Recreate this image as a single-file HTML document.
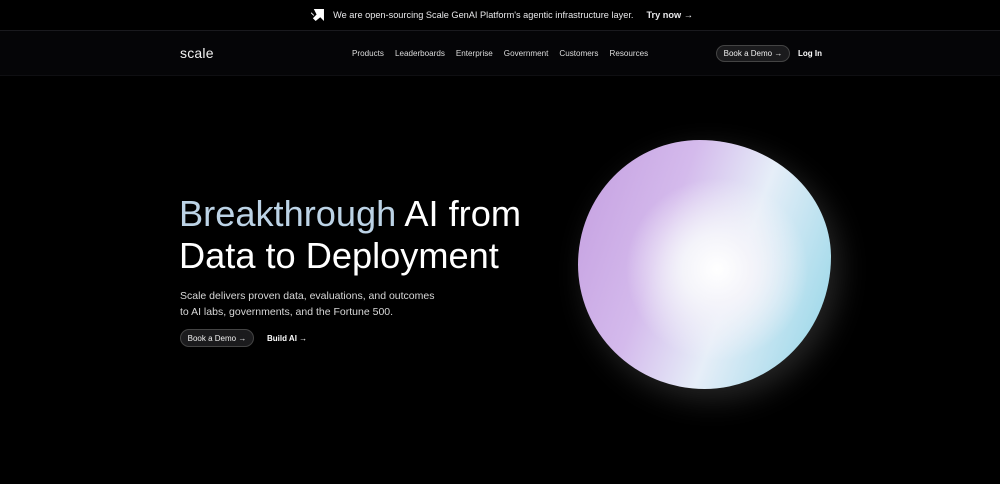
<!DOCTYPE html>
<html><head><meta charset="utf-8"><style>
*{margin:0;padding:0;box-sizing:border-box}
body{width:1000px;height:484px;background:#000;color:#fff;font-family:"Liberation Sans",sans-serif;overflow:hidden;position:relative}
.banner{height:31px;border-bottom:1px solid #1a1a1e;display:flex;align-items:center;justify-content:center;font-size:9.2px;color:#e8e8ea;padding-left:4px}
.banner b{font-weight:bold;margin-left:13px}
.nav{position:absolute;top:31px;left:0;right:0;height:45px;background:#050507;border-bottom:1px solid #0f0f12}
.logo{position:absolute;left:180px;top:14px;font-size:14px;letter-spacing:.2px;color:#f2f2f2}
.links{position:absolute;left:352px;top:18px;font-size:8.1px;color:#ddd}
.links span{margin-right:11px}
.btn{position:absolute;border:1px solid #444;border-radius:10px;background:#1b1b1d;font-size:8px;color:#eee;display:flex;align-items:center;justify-content:center}
h1{position:absolute;left:179px;top:193px;font-size:36.2px;font-weight:normal;line-height:42px;letter-spacing:0}
h1 .b{color:#bcd3e6}
p{position:absolute;left:180px;top:288px;font-size:10.5px;line-height:16px;color:#d8d8d8}
.blob{position:absolute;left:578px;top:140px;width:253px;height:249px;border-radius:48% 52% 50% 50%/50% 47% 53% 50%;
background:radial-gradient(circle at 55% 52%,#fff 0%,#f4f4fa 18%,rgba(240,240,250,0) 48%),linear-gradient(110deg,#c49ee0 0%,#d4baec 35%,#e6eef8 60%,#8dd4e6 100%);
box-shadow:8px 10px 30px rgba(255,255,255,.15)}
</style></head><body>
<div class="banner"><svg width="13" height="12" viewBox="0 0 14 13" style="margin-right:9px"><path d="M3 0H14V13L10 9 5 13 2 10 6 6 3 0Z" fill="#fff"/><path d="M0 4l3 3" stroke="#fff"/></svg>We are open-sourcing Scale GenAI Platform's agentic infrastructure layer.<b>Try now →</b></div>
<div class="nav">
<div class="logo">scale</div>
<div class="links"><span>Products</span><span>Leaderboards</span><span>Enterprise</span><span>Government</span><span>Customers</span><span>Resources</span></div>
<div class="btn" style="left:716px;top:14px;width:74px;height:17px">Book a Demo →</div>
<div style="position:absolute;left:798px;top:18px;font-size:8px;font-weight:bold">Log In</div>
</div>
<h1><span class="b">Breakthrough</span> AI from<br>Data to Deployment</h1>
<p>Scale delivers proven data, evaluations, and outcomes<br>to AI labs, governments, and the Fortune 500.</p>
<div class="btn" style="left:180px;top:329px;width:74px;height:18px">Book a Demo →</div>
<div style="position:absolute;left:267px;top:334px;font-size:8px;font-weight:bold">Build AI →</div>
<div class="blob"></div>
</body></html>
